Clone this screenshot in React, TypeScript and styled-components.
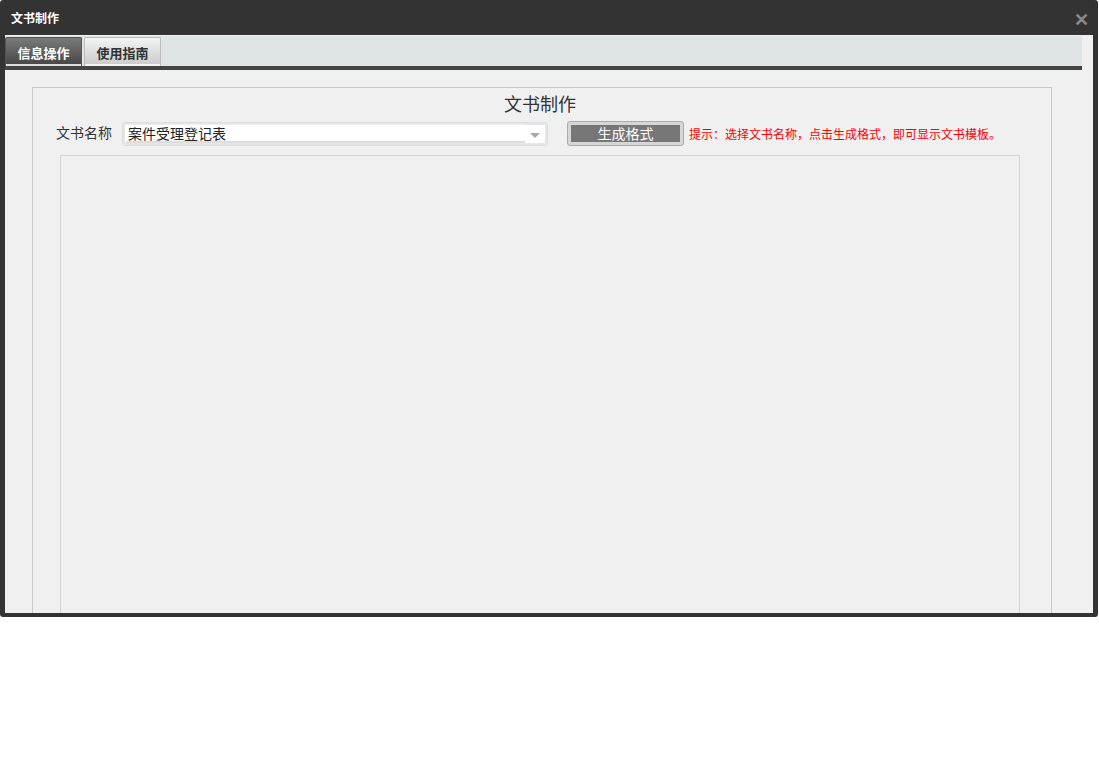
import styled, { createGlobalStyle } from 'styled-components'

const GlobalStyle = createGlobalStyle`
  html, body {
    margin: 0;
    padding: 0;
    background: #fff;
    font-family: "Microsoft YaHei", "Noto Sans CJK SC", "Liberation Sans", sans-serif;
  }
`

const Dialog = styled.div`
  width: 1098px;
  height: 617px;
  box-sizing: border-box;
  background: #333;
  border-radius: 3px;
  padding: 0 5px 4px 5px;
  display: flex;
  flex-direction: column;
`

const TitleBar = styled.div`
  height: 35px;
  display: flex;
  align-items: center;
  justify-content: space-between;
  padding: 0 4px 0 6px;
  color: #fff;
  font-size: 12px;
  font-weight: bold;
`

const CloseButton = styled.span`
  color: #8a8a8a;
  font-size: 18px;
  font-weight: bold;
  line-height: 1;
  cursor: pointer;
`

const Body = styled.div`
  flex: 1;
  background: #f0f0f0;
  overflow: hidden;
  display: flex;
  flex-direction: column;
`

const TabBar = styled.div`
  width: 1077px;
  height: 30px;
  margin-top: 1px;
  background: #dfe5e5;
  border-bottom: 4px solid #444;
  display: flex;
  align-items: flex-end;
  gap: 2px;
`

interface TabProps {
  active?: boolean
}

const Tab = styled.div<TabProps>`
  width: 77px;
  height: 29px;
  box-sizing: border-box;
  display: flex;
  align-items: center;
  justify-content: center;
  font-size: 13px;
  font-weight: bold;
  border-radius: 2px 2px 0 0;
  border: 1px solid ${(p) => (p.active ? '#555' : '#bbb')};
  border-bottom: none;
  color: ${(p) => (p.active ? '#fff' : '#333')};
  background: ${(p) =>
    p.active
      ? 'linear-gradient(#7a7a7a, #444)'
      : 'linear-gradient(#f4f4f4, #c9c9c9)'};
  box-shadow: inset 0 -2px 0 ${(p) => (p.active ? '#ddd' : '#f4f4f4')};
  cursor: pointer;
`

const Content = styled.div`
  flex: 1;
  padding: 17px 41px 0 27px;
  display: flex;
  flex-direction: column;
`

const Panel = styled.div`
  flex: 1;
  border: 1px solid #c8c8c8;
  border-bottom: none;
  display: flex;
  flex-direction: column;
  padding: 0 31px 0 27px;
`

const PanelTitle = styled.div`
  text-align: center;
  font-size: 18px;
  color: #333;
  height: 32px;
  line-height: 28px;
  margin-top: 1px;
`

const FormRow = styled.div`
  display: flex;
  align-items: center;
  height: 25px;
  margin-left: -4px;
`

const Label = styled.span`
  font-size: 14px;
  color: #333;
  width: 66px;
  margin-top: -3px;
`

const Select = styled.div`
  width: 426px;
  height: 24px;
  box-sizing: border-box;
  border: 1px solid #ddd;
  border-radius: 3px;
  background: #fff;
  box-shadow: inset 0 0 0 2px #e6e6e6;
  display: flex;
  align-items: center;
  position: relative;
`

const SelectText = styled.div`
  flex: 1;
  margin: 0 22px 0 3px;
  height: 16px;
  line-height: 16px;
  background: #fff;
  padding-left: 2px;
  font-size: 14px;
  color: #222;
  border-top: 1px solid #eee;
  border-bottom: 2px solid #ddd;
`

const Arrow = styled.span`
  position: absolute;
  right: 7px;
  top: 10px;
  width: 0;
  height: 0;
  border-left: 5px solid transparent;
  border-right: 5px solid transparent;
  border-top: 5px solid #a8a8a8;
`

const GenerateButton = styled.button`
  margin-left: 19px;
  width: 117px;
  height: 25px;
  box-sizing: border-box;
  border: 1px solid #aaa;
  border-radius: 3px;
  background: #d6d6d6;
  padding: 3px;
  cursor: pointer;
  display: flex;
`

const ButtonFace = styled.span`
  flex: 1;
  background: #777;
  color: #fff;
  font-size: 14px;
  line-height: 17px;
  font-family: "Microsoft YaHei", "Noto Sans CJK SC", sans-serif;
`

const Hint = styled.span`
  margin-left: 5px;
  color: #f00;
  font-size: 12px;
`

const Preview = styled.div`
  flex: 1;
  margin-top: 9px;
  border: 1px solid #d4d4d4;
  border-bottom: none;
  background: #f0f0f0;
`

export default function App() {
  return (
    <>
      <GlobalStyle />
      <Dialog>
        <TitleBar>
          <span>文书制作</span>
          <CloseButton>✕</CloseButton>
        </TitleBar>
        <Body>
          <TabBar>
            <Tab active>信息操作</Tab>
            <Tab>使用指南</Tab>
          </TabBar>
          <Content>
            <Panel>
              <PanelTitle>文书制作</PanelTitle>
              <FormRow>
                <Label>文书名称</Label>
                <Select>
                  <SelectText>案件受理登记表</SelectText>
                  <Arrow />
                </Select>
                <GenerateButton>
                  <ButtonFace>生成格式</ButtonFace>
                </GenerateButton>
                <Hint>提示：选择文书名称，点击生成格式，即可显示文书模板。</Hint>
              </FormRow>
              <Preview />
            </Panel>
          </Content>
        </Body>
      </Dialog>
    </>
  )
}
